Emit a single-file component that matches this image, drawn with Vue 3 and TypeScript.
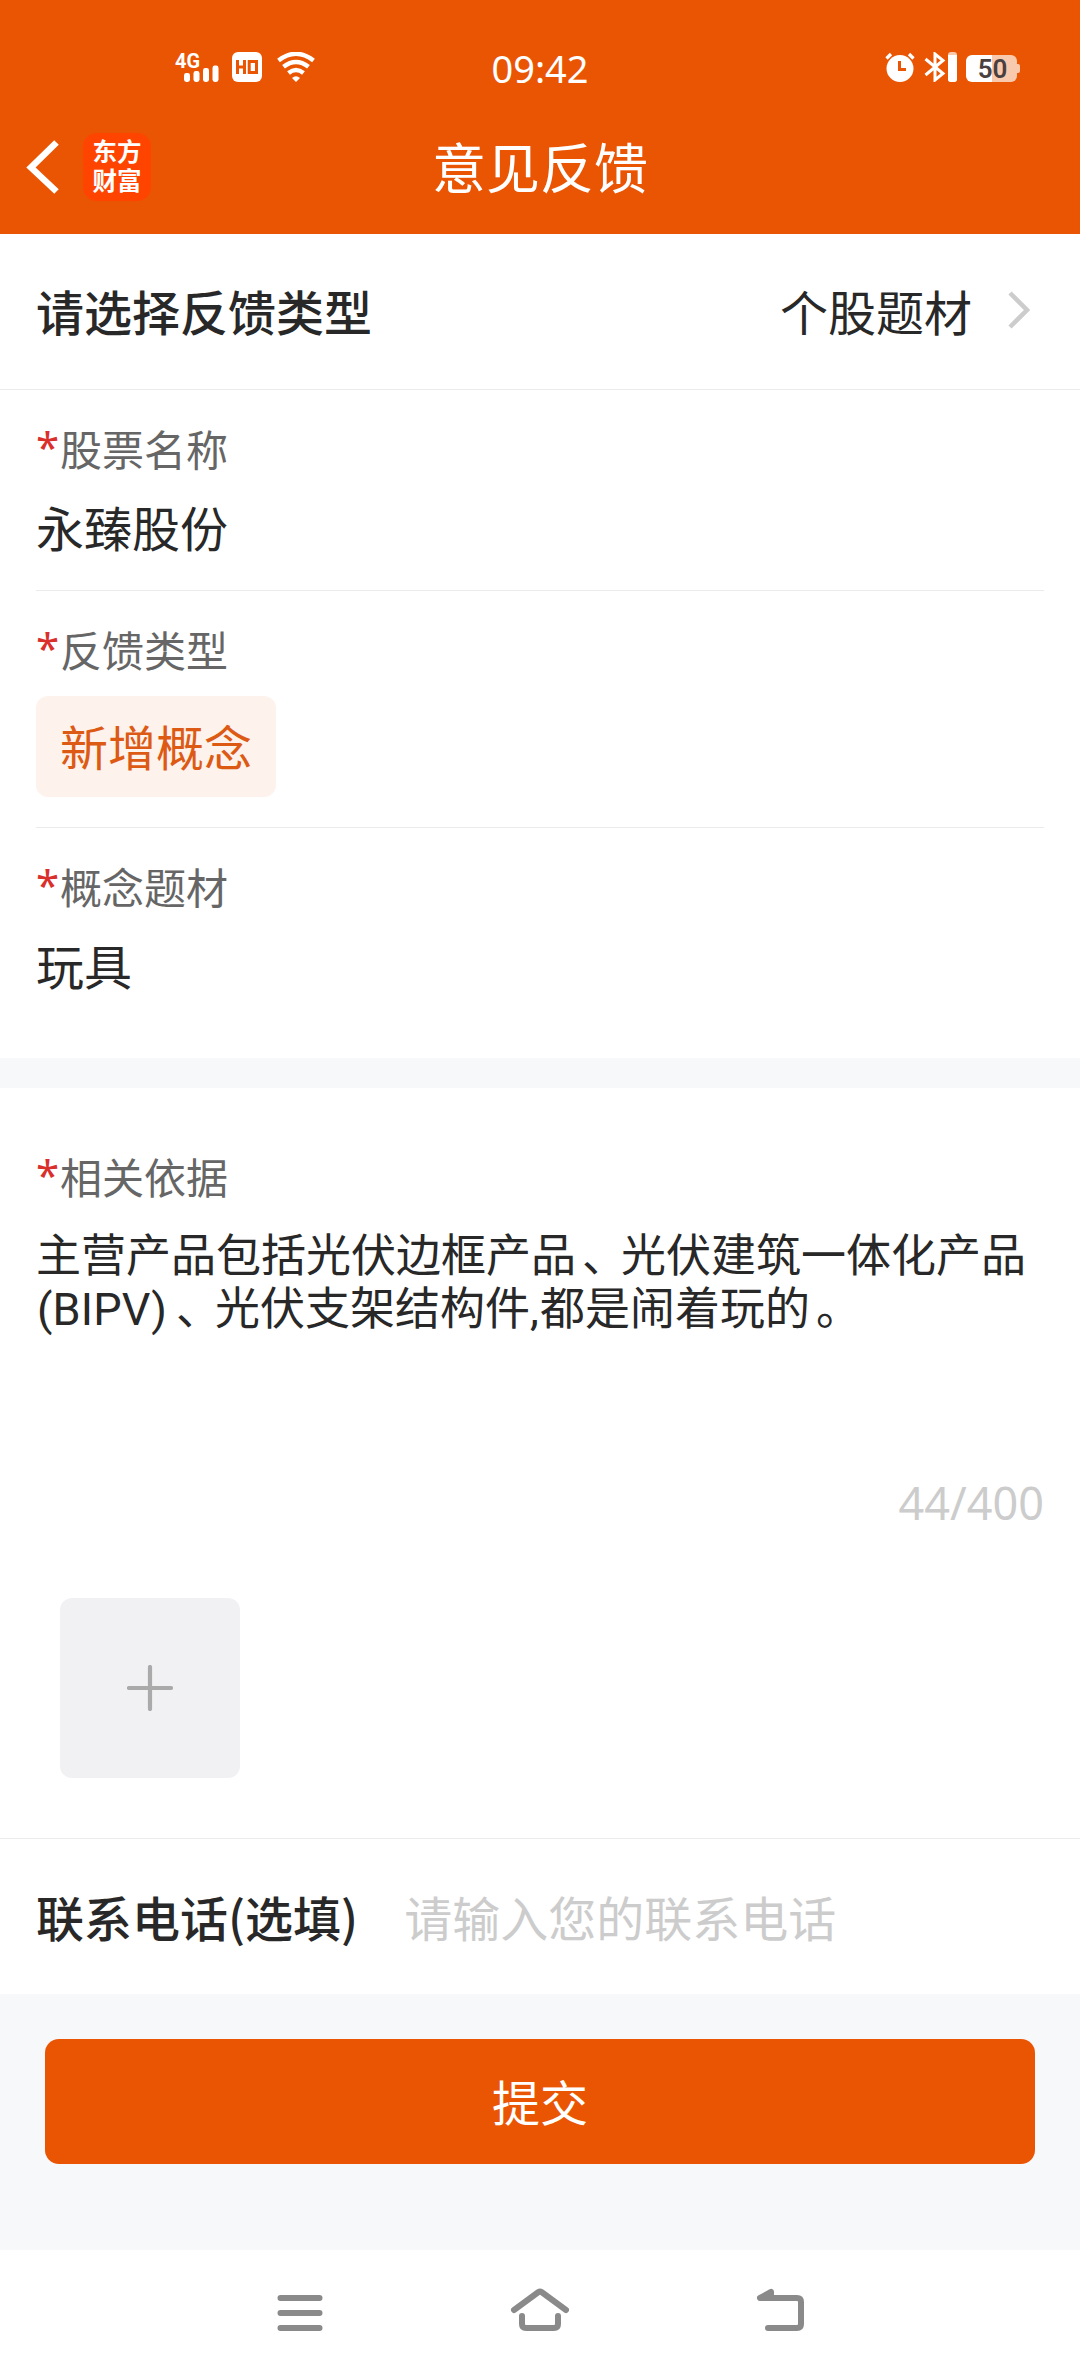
<script setup lang="ts">
interface Field {
  label: string
  value: string
  tag?: boolean
}

const fields: Field[] = [
  { label: '股票名称', value: '永臻股份' },
  { label: '反馈类型', value: '新增概念', tag: true },
  { label: '概念题材', value: '玩具' },
]
</script>

<template>
  <div class="page">
    <header class="header">
      <div class="status">
        <div class="status-left">
          <svg class="signal" width="46" height="32" viewBox="0 0 46 32">
            <text x="0" y="15.5" font-size="21" font-weight="700" textLength="25" lengthAdjust="spacingAndGlyphs" fill="#fff">4G</text>
            <g fill="#fff">
              <rect x="9" y="21" width="6" height="9" rx="2.4" />
              <rect x="18.5" y="19" width="6" height="11" rx="2.4" />
              <rect x="28" y="16" width="6" height="14" rx="2.4" />
              <rect x="37.5" y="13.5" width="6" height="16.5" rx="2.4" />
            </g>
          </svg>
          <svg class="hd" width="30" height="30" viewBox="0 0 30 30">
            <rect width="30" height="30" rx="6" fill="#fff" />
            <path d="M5.5 8v14M5.5 15h7M12.5 8v14M17.2 9.5h7.3v11h-7.3z" fill="none" stroke="#ea5504" stroke-width="3" />
          </svg>
          <svg class="wifi" width="38" height="30" viewBox="0 0 38 30">
            <path d="M1.5 8.5Q19-5 36.5 8.5M6.5 14.8Q19 5 31.5 14.8M11.5 21Q19 15 26.5 21" fill="none" stroke="#fff" stroke-width="4.4" />
            <path d="M15 26Q19 22.5 23 26L19 30z" fill="#fff" />
          </svg>
        </div>
        <div class="time">09:42</div>
        <div class="status-right">
          <svg class="alarm" width="30" height="30" viewBox="0 0 30 30">
            <circle cx="15" cy="16.5" r="13.5" fill="#fff" />
            <path d="M1.5 6.5L6 2M28.5 6.5L24 2" stroke="#fff" stroke-width="3.2" />
            <path d="M14.5 9v8.5h6.5" fill="none" stroke="#ea5504" stroke-width="3" />
          </svg>
          <svg class="bt" width="33" height="30" viewBox="0 0 33 30">
            <path d="M1.5 7L19 21.5 11 28V2L19 8.5 1.5 23" fill="none" stroke="#fff" stroke-width="3" />
            <rect x="24" y="0" width="9" height="30" rx="3" fill="#f9c9ae" />
            <path d="M24 3h9v24a3 3 0 0 1-3 3h-3a3 3 0 0 1-3-3z" fill="#fff" />
          </svg>
          <div class="battery"><span>50</span></div>
        </div>
      </div>
      <div class="navbar">
        <div class="nav-side">
          <svg class="back" width="34" height="58" viewBox="0 0 34 58">
            <path d="M30.5 4.5L5 29.5 30.5 53.5" fill="none" stroke="#fff" stroke-width="6.5" />
          </svg>
          <div class="logo"><span>东方</span><span>财富</span></div>
        </div>
        <h1>意见反馈</h1>
        <div class="nav-side"></div>
      </div>
    </header>

    <section class="type-row">
      <span class="strong">请选择反馈类型</span>
      <span class="picked">个股题材</span>
      <svg width="22" height="38" viewBox="0 0 22 38">
        <path d="M2 2L19 19 2 36" fill="none" stroke="#ccc" stroke-width="4.5" />
      </svg>
    </section>

    <section class="fields">
      <div v-for="f in fields" :key="f.label" class="field" :class="{ tagged: f.tag }">
        <div class="label"><i>*</i>{{ f.label }}</div>
        <div :class="f.tag ? 'tag' : 'value'">{{ f.value }}</div>
      </div>
    </section>

    <section class="basis">
      <div class="label"><i>*</i>相关依据</div>
      <div class="content">
        <div>主营产品包括光伏边框产品<span class="pause">、</span>光伏建筑一体化产品</div>
        <div><span class="latin">(BIPV)</span><span class="pause">、</span>光伏支架结构件<span class="comma">,</span>都是闹着玩的<span class="pause">。</span></div>
      </div>
      <div class="count">44/400</div>
      <div class="upload">
        <svg width="46" height="46" viewBox="0 0 46 46">
          <path d="M23 2v42M2 23h42" stroke="#aaa" stroke-width="4.2" stroke-linecap="round" />
        </svg>
      </div>
    </section>

    <section class="contact">
      <span class="strong">联系电话(选填)</span>
      <span class="placeholder">请输入您的联系电话</span>
    </section>

    <section class="footer">
      <button type="button">提交</button>
    </section>

    <nav class="system">
      <svg width="46" height="50" viewBox="0 0 46 50">
        <path d="M3.5 10h39M3.5 25h39M3.5 40h39" />
      </svg>
      <svg width="60" height="50" viewBox="0 0 60 50">
        <path d="M4 22L28.5 4Q30 3 31.5 4L56 22M12 28v8Q12 40 16 40h28Q48 40 48 36v-8" />
      </svg>
      <svg width="50" height="50" viewBox="0 0 50 50">
        <path d="M15 4L4 10h37Q45 10 45 14v22Q45 40 41 40H12M15 4v4" />
      </svg>
    </nav>
  </div>
</template>

<style>
body {
  margin: 0;
}
</style>

<style scoped>
.page {
  width: 1080px;
  height: 2376px;
  display: flex;
  flex-direction: column;
  background: #fff;
  color: #282828;
  font-family: 'Noto Sans CJK SC', sans-serif;
  font-size: 48px;
  line-height: 60px;
  overflow: hidden;
  white-space: nowrap;
}
.page * {
  box-sizing: border-box;
}
svg {
  display: block;
  flex: none;
}
.header {
  height: 234px;
  background: #ea5504;
  color: #fff;
}
.status {
  height: 100px;
  padding-top: 52px;
  display: grid;
  grid-template-columns: 1fr auto 1fr;
}
.status-left,
.status-right {
  display: flex;
  align-items: flex-start;
}
.status-left {
  padding-left: 175px;
}
.status-right {
  justify-content: flex-end;
  padding-right: 63px;
}
.signal {
  overflow: visible;
  font-family: Roboto, sans-serif;
}
.hd {
  margin-left: 11px;
}
.wifi {
  margin-left: 15px;
}
.time {
  font-family: 'Noto Sans', sans-serif;
  font-size: 38px;
  line-height: 32px;
}
.bt {
  margin-left: 9px;
}
.battery {
  position: relative;
  width: 51px;
  height: 27px;
  margin: 3px 0 0 9px;
  padding-left: 2px;
  border-radius: 6px;
  background: linear-gradient(90deg, #fff 51%, #f9c9ae 51%);
  color: #4a4040;
  font: 600 26px/28px Roboto, sans-serif;
  text-align: center;
}
.battery::after {
  content: '';
  position: absolute;
  right: -3px;
  top: 9px;
  width: 3px;
  height: 9px;
  border-radius: 0 2px 2px 0;
  background: #f9c9ae;
}
.navbar {
  height: 134px;
  display: flex;
  align-items: center;
}
.nav-side {
  flex: 1;
  display: flex;
  align-items: center;
  padding-left: 26px;
}
.nav-side:last-child {
  padding: 0 26px 0 0;
}
.logo {
  width: 68px;
  height: 68px;
  margin-left: 23px;
  padding-top: 3px;
  border-radius: 14px;
  background: #ff4400;
  font-size: 24.5px;
  font-weight: 700;
  line-height: 29px;
  text-align: center;
}
.logo span {
  display: block;
}
h1 {
  margin: 0 0 2px;
  font-size: 54px;
  font-weight: 400;
  line-height: 80px;
}
.strong {
  font-weight: 500;
}
.type-row {
  height: 156px;
  padding: 0 50px 3px 36px;
  display: flex;
  align-items: center;
  border-bottom: 1px solid #ebebeb;
}
.picked {
  margin: 0 36px 0 auto;
}
.fields {
  height: 668px;
  padding: 0 36px;
}
.field {
  height: 201px;
  padding-top: 28px;
  border-bottom: 1px solid #ebebeb;
}
.field.tagged {
  height: 237px;
}
.field:last-child {
  border-bottom: 0;
}
.label {
  display: flex;
  height: 60px;
  color: #666;
  font-size: 42px;
  line-height: 60px;
}
.label i {
  width: 24px;
  color: #d9302c;
  font-family: 'Noto Sans', sans-serif;
  font-style: normal;
  line-height: 58px;
}
.value {
  margin-top: 18px;
}
.tag {
  width: 240px;
  height: 101px;
  margin-top: 17px;
  border-radius: 12px;
  background: #fdf2ec;
  color: #dc5a14;
  line-height: 98px;
  text-align: center;
}
.basis {
  height: 781px;
  padding: 58px 36px 0;
  border-top: 30px solid #f7f8fa;
  border-bottom: 1px solid #ebebeb;
  display: flex;
  flex-direction: column;
}
.content {
  height: 247px;
  margin-top: 20px;
  font-size: 45px;
  line-height: 53px;
}
.pause {
  display: inline-block;
  width: 45px;
  text-indent: 6px;
}
.latin {
  margin: 0 3px 0 1px;
  font-family: Roboto, sans-serif;
  letter-spacing: 0.2px;
}
.comma {
  padding-right: 1px;
  font-family: Roboto, sans-serif;
}
.count {
  align-self: flex-end;
  color: #ccc;
  font-family: 'Noto Sans', sans-serif;
  font-size: 45px;
  line-height: 60px;
}
.upload {
  width: 180px;
  height: 180px;
  margin: 65px 0 0 24px;
  border-radius: 12px;
  background: #f1f1f4;
  display: flex;
  align-items: center;
  justify-content: center;
}
.contact {
  height: 155px;
  padding: 0 36px 2px;
  display: flex;
  align-items: center;
}
.placeholder {
  margin-left: 46px;
  color: #ccc;
}
.footer {
  height: 256px;
  padding: 45px 45px 0;
  background: #f7f8fa;
}
button {
  display: block;
  width: 100%;
  height: 125px;
  padding: 0 0 3px;
  border: 0;
  border-radius: 14px;
  background: #ea5504;
  color: #fff;
  font: inherit;
}
.system {
  flex: 1;
  padding: 38px 274px 0 277px;
  display: flex;
  justify-content: space-between;
}
.system path {
  fill: none;
  stroke: #8a8a8a;
  stroke-width: 6;
  stroke-linecap: round;
  stroke-linejoin: round;
}
</style>
